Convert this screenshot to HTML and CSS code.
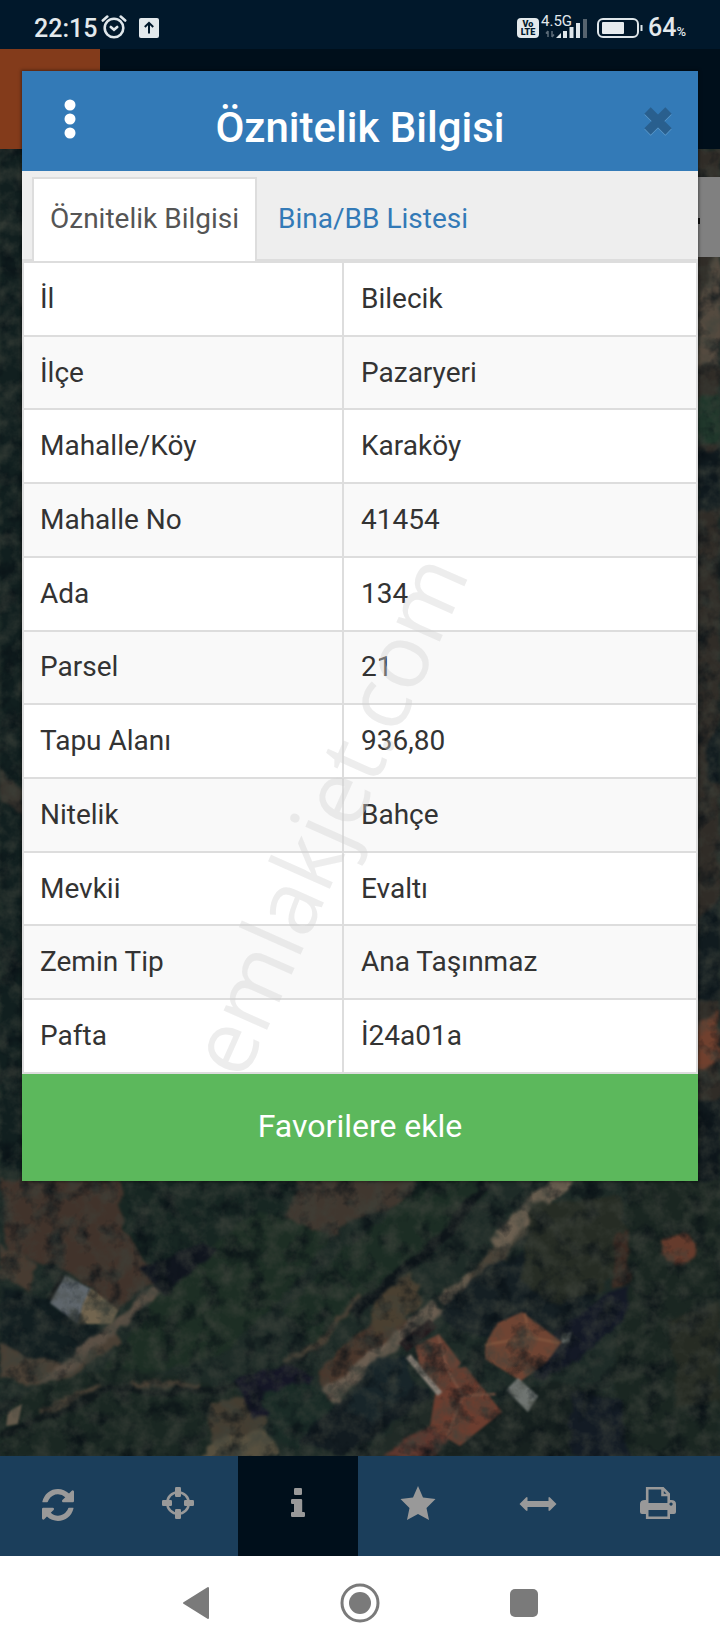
FILE: index.html
```html
<!DOCTYPE html>
<html lang="tr">
<head>
<meta charset="utf-8">
<meta name="viewport" content="width=device-width, initial-scale=1">
<title>Öznitelik Bilgisi</title>
<link rel="stylesheet" href="styles.css">
</head>
<body>
<div class="statusbar">
  <div class="status-left">
    <span class="clock">22:15</span>
    <svg class="ic-alarm" viewBox="0 0 26 26" fill="none" stroke="#dfe6ea" stroke-width="2.6" stroke-linecap="round"><circle cx="13" cy="14" r="9.3"/><path d="M1.8 6.5 6.3 2.6M24.2 6.5 19.7 2.6M9.8 13l3.2 2.8 3.2-2.8"/></svg>
    <svg class="ic-up" viewBox="0 0 20 20"><rect width="20" height="20" rx="2" fill="#e3e9ec"/><path d="M10 15.5V5M5.8 9 10 4.8 14.2 9" fill="none" stroke="#01182b" stroke-width="2"/></svg>
  </div>
  <div class="status-right">
    <span class="volte"><span>Vo</span><span>LTE</span></span>
    <span class="signal">
      <span class="net">4.5G</span>
      <svg class="ic-signal" viewBox="0 0 44 20"><path d="M4 12v6M2 14.500l2-2.500M8 12v6M10 15.500l-2 2.500" stroke="#5c6b78" stroke-width="1.500" fill="none"/><g fill="#dfe6ea"><path d="M12 19l5-5v5z"/><rect x="19" y="12" width="4" height="7"/><rect x="25.500" y="8" width="4" height="11"/><rect x="32" y="4" width="4" height="15"/></g><rect x="39" y="0" width="4" height="19" fill="#56636e"/></svg>
    </span>
    <svg class="ic-battery" viewBox="0 0 46 20"><rect x="1" y="1" width="40" height="18" rx="5" fill="none" stroke="#dfe6ea" stroke-width="2"/><rect x="5" y="4" width="22" height="12" rx="1" fill="#e6ebee"/><path d="M44.500 7v6" stroke="#dfe6ea" stroke-width="2"/></svg>
    <span class="charge">64<small>%</small></span>
  </div>
</div>

<div class="app">
  <div class="app-head"><div class="app-logo"></div></div>
  <div class="map">
    <svg class="map-image" viewBox="0 149 720 1307" preserveAspectRatio="xMidYMax slice" aria-hidden="true">
      <defs>
        <filter id="soft" x="-5%" y="-5%" width="110%" height="110%" color-interpolation-filters="sRGB"><feTurbulence type="fractalNoise" baseFrequency="0.06" numOctaves="3" seed="4" result="n"/><feDisplacementMap in="SourceGraphic" in2="n" scale="12" xChannelSelector="R" yChannelSelector="G"/><feGaussianBlur stdDeviation="1.6"/></filter>
        <filter id="roof" x="-5%" y="-5%" width="110%" height="110%" color-interpolation-filters="sRGB"><feGaussianBlur stdDeviation="0.9"/></filter>
        <filter id="grain" x="0" y="0" width="100%" height="100%" color-interpolation-filters="sRGB"><feTurbulence type="fractalNoise" baseFrequency="0.045" numOctaves="4" seed="9"/><feColorMatrix values="0 0 0 0 0.03  0 0 0 0 0.06  0 0 0 0 0.08  2.2 0 0 0 -1.05"/></filter>
        <filter id="light" x="0" y="0" width="100%" height="100%" color-interpolation-filters="sRGB"><feTurbulence type="fractalNoise" baseFrequency="0.06" numOctaves="4" seed="21"/><feColorMatrix values="0 0 0 0 0.24  0 0 0 0 0.26  0 0 0 0 0.23  0 1.4 0 0 -0.55"/></filter>
      </defs>
      <rect y="149" width="720" height="1307" fill="#1e2b27"/>
      <g filter="url(#soft)">
        <rect x="0" y="149" width="24" height="1020" fill="#111f1f"/>
        <path d="M0 770l24 22v22L0 800z" fill="#37332d"/>
        <path d="M696 149h24v1030h-24z" fill="#302c27"/>
        <path d="M700 300l20-60v125h-24z" fill="#544a3f"/>
        <path d="M696 400l24-8v52h-24z" fill="#20372b"/>
        <path d="M696 450h24v60h-24zM706 740l14-14v60l-14-10zM696 920l24-20v100h-24z" fill="#111b1f"/>
        <path d="M696 1025l24-16v50l-24 12z" fill="#70402e"/>
        <path d="M696 1100h24v90h-24z" fill="#10191d"/>
        <path d="M0 1180h122l20 45 25 25-12 32-42 28-45-40-60-20z" fill="#41332b"/>
        <path d="M0 1245l40 18-12 26-28-12z" fill="#473b31"/>
        <path d="M120 1170h180l-20 60-60 20-50 40-16-20-30-40z" fill="#172622"/>
        <path d="M298 1175h120l-10 32-50 10-70 50-16-6 14-45z" fill="#40372f"/>
        <path d="M282 1222l35 16-30 22-10-4z" fill="#554a3f"/>
        <path d="M0 1290l50 8 60 38-12 20-55 22-43-24z" fill="#121e20"/>
        <path d="M0 1340l22 14 40 12 52-38 4 16-66 46-52-12z" fill="#4a4035"/>
        <path d="M112 1330l48-44" stroke="#5b5045" stroke-width="9"/>
        <path d="M40 1388l72-58" stroke="#5b5045" stroke-width="10"/>
        <path d="M165 1280l95-70 70 25-45 60-65 60-90 25-30-5z" fill="#1d2e24"/>
        <path d="M140 1268l60-25 18 6-54 45z" fill="#10151e"/>
        <path d="M300 1330l60-60 60-50 50-45" fill="none" stroke="#1c2d24" stroke-width="50"/>
        <path d="M35 1385l80-18 120 22 20 45-40 22H0v-40z" fill="#1a2722"/>
        <path d="M0 1437l50-22 62-27 55 4 60-4 62-22 28-20" fill="none" stroke="#10181a" stroke-width="6"/>
        <path d="M40 1412l60-26M130 1383l70 3M285 1361l30-14 45-50" fill="none" stroke="#473f34" stroke-width="6"/>
        <path d="M352 1316l50-46 40-30 25-35 24-30" fill="none" stroke="#0e1519" stroke-width="10"/>
        <path d="M318 1370l42-36 30-24 20 12-82 80z" fill="#4a372c"/>
        <path d="M375 1300l38-30 8 35-30 25-20 5z" fill="#4a4031"/>
        <path d="M327 1398l110-92" stroke="#6a5d50" stroke-width="16"/>
        <path d="M440 1304l38-30" stroke="#655a4c" stroke-width="13"/>
        <path d="M474 1280l50-54" stroke="#4a4338" stroke-width="14"/>
        <path d="M498 1245l34-38 38-32" fill="none" stroke="#6b5f50" stroke-width="17"/>
        <path d="M440 1312l45-44 55-24 60 10 14 20-50 60-50 10-60-15z" fill="#151f23"/>
        <path d="M530 1205l90-10 12 60-30 35-50 15-30-24z" fill="#262c24"/>
        <path d="M615 1235l22-12-4 58-20 6z" fill="#3b2a22"/>
        <path d="M210 1405l40-12 18 26-15 22-40 10z" fill="#443d31"/>
        <path d="M215 1440l50-10 14 22-20 8h-60z" fill="#57503f"/>
        <path d="M235 1380l50-15 28 10-20 35-40 8z" fill="#151626"/>
        <path d="M262 1395l45-15 25 25-35 45-20-10z" fill="#1a2b26"/>
        <path d="M300 1440l40-42 60-25 30 20-60 50-30 13z" fill="#121b20"/>
        <path d="M370 1362l32-6 12 30-40 35-30-10z" fill="#182529"/>
        <path d="M380 1440l50-45 30 20-40 41h-60z" fill="#202a26"/>
        <path d="M385 1456l42-30 50 10-40 20z" fill="#61372e"/>
        <path d="M560 1330l50-40 20-5v25l-50 50-40 20-20-20z" fill="#141926"/>
        <path d="M470 1420l80-40 60 15 30 61H430z" fill="#17211f"/>
        <path d="M625 1180h95v276h-90l-20-80 20-90z" fill="#1a2621"/>
        <path d="M670 1320l50-20v100l-40 10z" fill="#262b23"/>
        <path d="M570 1390l50 10 10 56h-60z" fill="#131b24"/>
        <path d="M663 1240l22-8 12 18-12 14-12 2-10-12z" fill="#653b2c"/>
      </g>
      <g filter="url(#roof)">
        <path d="M62 1276l-12 24" stroke="#101417" stroke-width="5"/>
        <path d="M65 1275l26 14-9 20-4 15-28-21z" fill="#5f666c"/>
        <path d="M91 1288l27 22-6 14-34 0 5-20z" fill="#72654f"/>
        <path d="M415 1346l24-12 22 29-20 28-20-20z" fill="#6b4234"/>
        <path d="M441 1370l25-3 36 45-42 34-30-18 4-28z" fill="#6c3d2f"/>
        <path d="M438 1335l10 36 15 25-16 40M460 1396l36-2" stroke="#7d5443" stroke-width="2" fill="none"/>
        <path d="M399 1343l30-24 8 8-30 25z" fill="#241b1e"/>
        <path d="M408 1356l32 38" stroke="#8b8278" stroke-width="6"/>
        <path d="M485 1345l12-22 25-11 40 30-15 20-26 19-36-22z" fill="#6f4433"/>
        <path d="M525 1313l4 24 30 6M529 1337l-44 8" stroke="#85583f" stroke-width="2" fill="none"/>
        <path d="M518 1378l20 18-10 16-22-22z" fill="#6f7471"/>
        <path d="M562 1335l9-3-2 10-7 1z" fill="#8a908d"/>
        <path d="M8 1412l14-8-4 20-12 2z" fill="#63594b"/>
      </g>
      <rect y="149" width="720" height="1307" filter="url(#grain)"/>
      <rect y="149" width="720" height="1307" filter="url(#light)"/>
    </svg>
    <div class="map-button"><span class="map-button-bar"></span></div>
  </div>
  <div class="toolbar">
    <button class="tool" aria-label="Yenile"><svg width="32" height="38" viewBox="0 0 1536 1792" fill="currentColor"><path d="M1511 1056q0 5-1 7-64 268-268 434.500t-478 166.500q-146 0-282.500-55t-243.500-157l-129 129q-19 19-45 19t-45-19-19-45v-448q0-26 19-45t45-19h448q26 0 45 19t19 45-19 45l-137 137q71 66 161 102t187 36q134 0 250-65t186-179q11-17 53-117 8-23 30-23h192q13 0 22.500 9.500t9.500 22.500zm25-800v448q0 26-19 45t-45 19h-448q-26 0-45-19t-19-45 19-45l138-138q-148-137-349-137-134 0-250 65t-186 179q-11 17-53 117-8 23-30 23h-199q-13 0-22.500-9.500t-9.500-22.500v-7q65-268 270-434.500t480-166.500q146 0 284 55.500t245 156.500l130-129q19-19 45-19t45 19 19 45z"/></svg></button>
    <button class="tool" aria-label="Konum"><svg width="32" height="36" viewBox="0 0 32 36"><circle cx="16" cy="16" r="10.800" fill="none" stroke="currentColor" stroke-width="2.600"/><g fill="currentColor"><rect x="13" width="6" height="10" rx="1.200"/><rect x="13" y="22" width="6" height="10" rx="1.200"/><rect y="13" width="10" height="6" rx="1.200"/><rect x="22" y="13" width="10" height="6" rx="1.200"/></g></svg></button>
    <button class="tool active" aria-label="Bilgi"><svg width="14" height="36" viewBox="0 0 14 36" fill="currentColor"><rect x="3" y="1" width="8" height="7" rx="1.200"/><path d="M1.200 12H10q1.200 0 1.200 1.200V25h1.600q1.200 0 1.200 1.200v2.600q0 1.200-1.200 1.200H1.200Q0 30 0 28.800v-2.600Q0 25 1.200 25H3v-8H1.200Q0 17 0 15.800v-2.600Q0 12 1.200 12z"/></svg></button>
    <button class="tool" aria-label="Favoriler"><svg width="36" height="38" viewBox="0 0 36 38"><path d="M18 0l5 11.500L35.500 13l-9 9L29 34l-11-6-11 6 2.500-12-9-9L13 11.500z" fill="currentColor"/></svg></button>
    <button class="tool" aria-label="Ölçüm"><svg width="38" height="36" viewBox="0 0 38 36"><path d="M.5 17 7 10.500q1.500-1 1.500.5v3h21v-3q0-1.500 1.500-.5l6.500 6.500-6.500 6.500q-1.500 1-1.500-.5v-3h-21v3q0 1.500-1.500.5z" fill="currentColor"/></svg></button>
    <button class="tool" aria-label="Yazdır"><svg width="36" height="36" viewBox="0 0 36 36" fill="none"><path d="M7.200 16V1.300h15.800l5.700 5.700V16M22.500 1.500V8h6" stroke="currentColor" stroke-width="2.600"/><path fill="currentColor" fill-rule="evenodd" d="M5 13h1v3h24v-3h1q5 0 5 4v8q0 2-2 2h-4v-4H6v4H2q-2 0-2-2v-8q0-4 5-4zm26 2.500a1.600 1.600 0 1 0 .1 0z"/><path d="M7.200 22v8.700h21.500V22" stroke="currentColor" stroke-width="2.600"/></svg></button>
  </div>

  <div class="overlay">
    <section class="dialog" role="dialog" aria-labelledby="dialog-title">
      <header class="dialog-head">
        <button class="more" aria-label="Menü"><svg width="12" height="40" viewBox="0 0 12 40" fill="#fff"><circle cx="6" cy="6" r="5.500"/><circle cx="6" cy="20" r="5.500"/><circle cx="6" cy="34" r="5.500"/></svg></button>
        <h1 id="dialog-title">Öznitelik Bilgisi</h1>
        <button class="close" aria-label="Kapat"><svg width="30" height="32" viewBox="0 0 30 32" fill="none" stroke-width="9" stroke-linejoin="round"><path d="M4.500 6.500l21 21m0-21l-21 21" stroke="#5c9acb"/><path d="M4.500 5.500l21 21m0-21l-21 21" stroke="#295f8e"/></svg></button>
      </header>
      <nav class="tabs">
        <a class="tab current" href="#bilgi">Öznitelik Bilgisi</a>
        <a class="tab" href="#liste">Bina/BB Listesi</a>
      </nav>
      <div class="details" id="bilgi">
        <table>
          <tbody>
            <tr><th scope="row">İl</th><td>Bilecik</td></tr>
            <tr><th scope="row">İlçe</th><td>Pazaryeri</td></tr>
            <tr><th scope="row">Mahalle/Köy</th><td>Karaköy</td></tr>
            <tr><th scope="row">Mahalle No</th><td>41454</td></tr>
            <tr><th scope="row">Ada</th><td>134</td></tr>
            <tr><th scope="row">Parsel</th><td>21</td></tr>
            <tr><th scope="row">Tapu Alanı</th><td>936,80</td></tr>
            <tr><th scope="row">Nitelik</th><td>Bahçe</td></tr>
            <tr><th scope="row">Mevkii</th><td>Evaltı</td></tr>
            <tr><th scope="row">Zemin Tip</th><td>Ana Taşınmaz</td></tr>
            <tr><th scope="row">Pafta</th><td>İ24a01a</td></tr>
          </tbody>
        </table>
        <div class="watermark">emlakjet.com</div>
      </div>
      <button class="favorite">Favorilere ekle</button>
    </section>
  </div>
</div>

<div class="navbar">
  <button aria-label="Geri"><svg width="28" height="34" viewBox="0 0 28 34"><path d="M2 17 26 2v30z" fill="#7a7a7a" stroke="#7a7a7a" stroke-width="2" stroke-linejoin="round"/></svg></button>
  <button aria-label="Ana ekran"><svg width="40" height="40" viewBox="0 0 40 40"><circle cx="20" cy="20" r="18" fill="none" stroke="#7a7a7a" stroke-width="3"/><circle cx="20" cy="20" r="11" fill="#7a7a7a"/></svg></button>
  <button aria-label="Son uygulamalar"><svg width="28" height="28" viewBox="0 0 28 28"><rect width="28" height="28" rx="5" fill="#7a7a7a"/></svg></button>
</div>
</body>
</html>
```

FILE: styles.css
```css
* { box-sizing: border-box; }

body {
  margin: 0;
  min-height: 100vh;
  display: flex;
  flex-direction: column;
  font-family: Roboto, "Liberation Sans", sans-serif;
  font-size: 28px;
  color: #333;
  background: #fff;
}

button {
  margin: 0;
  padding: 0;
  border: 0;
  background: none;
  font: inherit;
  color: inherit;
  cursor: pointer;
}

svg { display: block; }

.statusbar {
  display: flex;
  justify-content: space-between;
  align-items: center;
  height: 49px;
  padding: 6px 34px 0;
  background: #01182b;
  color: #e3e9ec;
}

.status-left, .status-right { display: flex; align-items: center; }

.clock { padding-top: 2px; font-size: 25px; font-weight: 500; line-height: 28px; }
.ic-alarm { width: 26px; height: 26px; margin: 0 12px 2px 4px; }
.ic-up { width: 20px; height: 20px; }

.volte {
  display: flex;
  flex-direction: column;
  align-items: center;
  width: 22px;
  height: 20px;
  padding-top: 2px;
  border-radius: 4px;
  background: #e3e9ec;
  color: #01182b;
  font-size: 9px;
  font-weight: 900;
  line-height: 8px;
}

.signal { position: relative; width: 48px; height: 32px; margin-left: 2px; }
.net { position: absolute; left: 0; top: 0; font-size: 15px; line-height: 18px; }
.ic-signal { position: absolute; left: 3px; bottom: 5px; width: 44px; height: 20px; }
.ic-battery { width: 46px; height: 20px; margin: 0 5px 0 8px; }
.charge { display: flex; align-items: baseline; padding-top: 4px; font-size: 25px; font-weight: 500; line-height: 28px; }
.charge small { font-size: 13px; }

.app {
  position: relative;
  flex: 1;
  display: flex;
  flex-direction: column;
}

.app-head { height: 100px; background: #000f1b; }
.app-logo { width: 100px; height: 100%; background: #833b1b; }

.map { position: relative; flex: 1; overflow: hidden; background: #1b2826; }
.map-image { position: absolute; inset: 0; width: 100%; height: 100%; }

.map-button {
  position: absolute;
  top: 28px;
  right: 0;
  display: flex;
  justify-content: center;
  align-items: center;
  width: 80px;
  height: 80px;
  padding-top: 8px;
  background: #808080;
}

.map-button-bar { width: 40px; height: 6px; background: #111; }

.toolbar {
  display: grid;
  grid-template-columns: repeat(6, 1fr);
  height: 100px;
  margin-left: -2px;
  padding-right: 2px;
  background: #1b3e5b;
  color: #999;
}

.tool { display: flex; justify-content: center; align-items: center; padding-bottom: 2px; }
.tool.active { background: #000f1b; }

.overlay { position: absolute; inset: 0; padding: 22px; }

.dialog { background: #fff; box-shadow: 0 0 3px 1px rgba(0, 0, 0, .4); }

.dialog-head {
  display: grid;
  grid-template-columns: 32px 1fr 32px;
  align-items: center;
  height: 100px;
  padding: 0 24px 0 32px;
  background: #337ab7;
  color: #fff;
}

.dialog-head h1 {
  margin: 0;
  padding: 14px 8px 0 0;
  font-size: 42px;
  font-weight: 500;
  line-height: 48px;
  text-align: center;
}

.more { justify-self: center; padding-bottom: 4px; }
.close { justify-self: center; }

.tabs {
  display: flex;
  height: 90px;
  padding: 6px 10px 0;
  border-bottom: 2px solid #ddd;
  background: #eee;
}

.tab {
  display: flex;
  align-items: center;
  height: 84px;
  padding: 0 16px 4px;
  border: 2px solid transparent;
  border-bottom: 0;
  color: #337ab7;
  text-decoration: none;
}

.tab + .tab { margin-left: 3px; }
.tab.current { border-color: #ddd; background: #fff; color: #555; }

.details { position: relative; }

table {
  width: 100%;
  height: 813px;
  border-collapse: collapse;
  table-layout: fixed;
}

th, td {
  padding: 16px;
  border: 2px solid #ddd;
  font-weight: 400;
  line-height: 36px;
  text-align: left;
}

td { padding-left: 17px; }
th { width: 320px; }
tr:nth-child(even) { background: #f9f9f9; }

.watermark {
  position: absolute;
  top: 68%;
  left: 45%;
  font-family: "Open Sans", "Noto Sans", sans-serif;
  font-size: 89px;
  line-height: 88px;
  color: rgba(210, 210, 210, .4);
  transform: translate(-50%, -50%) rotate(-66deg);
  pointer-events: none;
}

.favorite {
  display: block;
  width: 100%;
  padding: 32px 16px 35px;
  background: #5cb85c;
  color: #fff;
  font-size: 32px;
  line-height: 40px;
}

.navbar {
  display: flex;
  justify-content: center;
  align-items: center;
  gap: 130px;
  height: 94px;
}
```
